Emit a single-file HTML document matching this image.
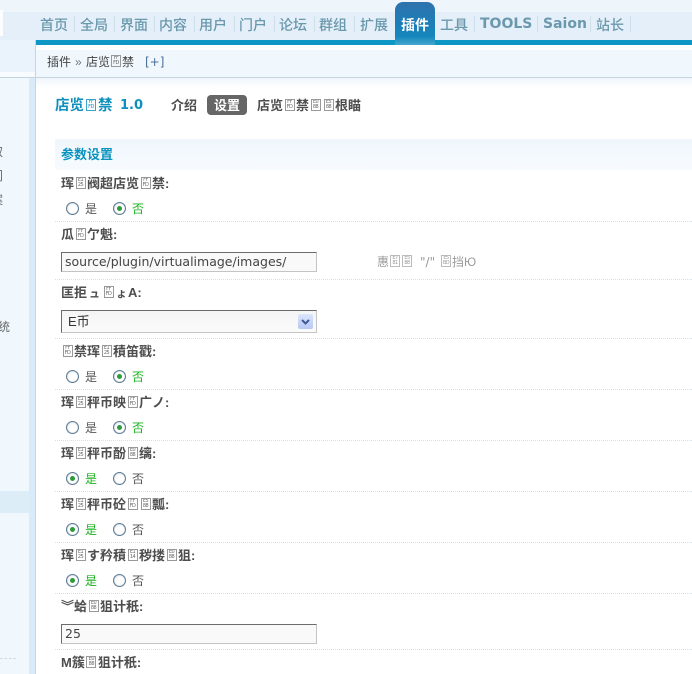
<!DOCTYPE html>
<html><head><meta charset="utf-8">
<style>
html,body{margin:0;padding:0;background:#fff}
#p{position:relative;width:692px;height:674px;overflow:hidden;background:#fff;font-family:"Liberation Sans","Noto Sans CJK SC",sans-serif;font-size:12px;color:#555}
#p>div{position:absolute}
.s{position:absolute;white-space:nowrap;line-height:16px}
.m{position:absolute;top:15px;line-height:20px;font-size:14px;color:#6a98ac;font-weight:500;white-space:nowrap;font-family:"Noto Sans CJK SC",sans-serif}
.m.e{font-family:"DejaVu Sans",sans-serif;font-weight:bold;top:14px}
.sep{position:absolute;top:16px;width:1px;height:16px;background:#cfdfe9}
.l{position:absolute;left:61px;font-weight:bold;line-height:16px;white-space:nowrap;color:#4d4d4d;font-family:"Liberation Sans","Noto Sans CJK SC",sans-serif;font-size:13px}
.l b{font-family:"Liberation Sans",sans-serif}
.t{display:inline-block;box-sizing:border-box;width:10px;height:12px;border:1px solid #999;font:normal 5px/5px "DejaVu Sans",sans-serif;color:#666;text-align:center;vertical-align:-1px;margin:0 1.5px;overflow:hidden;letter-spacing:-.5px;font-style:normal}
.n .t{margin:0 1px}
.d{position:absolute;left:55px;right:0;height:0;border-top:1px dotted #d4dfe6}
.r{position:absolute;width:11px;height:11px;border:1px solid #5d7a92;border-radius:50%;background:radial-gradient(circle at 60% 60%,#fff 40%,#dfe6ec 100%);box-shadow:inset 0 0 1px #8ea3b5}
.r.c::after{content:"";position:absolute;left:3px;top:3px;width:5px;height:5px;border-radius:50%;background:#2f9a3a}
.o{position:absolute;line-height:16px;font-size:12px;color:#555}
.g{color:#19b21e}
.i{position:absolute;left:61px;width:256px;box-sizing:border-box;border:1px solid #c4c4c4;border-top-color:#6b6b6b;border-left-color:#6b6b6b;background:#f9f9f9;font:12.5px/18px "DejaVu Sans",sans-serif;color:#444;padding-left:3px;white-space:nowrap}
</style></head><body>
<div id="p">
<div style="left:0;top:0;width:692px;height:12px;background:#eef5fb"></div>
<div style="left:0;top:12px;width:692px;height:28px;background:#e4eff9"></div>
<div style="left:0;top:40px;width:35px;height:32px;background:#eaf3fb"></div>
<div style="left:0;top:10px;width:3px;height:26px;background:#fbfdff"></div>
<div style="left:0;top:72px;width:35px;height:5px;background:#f8fbfe"></div>
<div style="left:35px;top:40px;width:657px;height:5px;background:#0e97c5"></div>
<div style="left:35px;top:45px;width:657px;height:5px;background:#fff"></div>
<div style="left:35px;top:50px;width:657px;height:27px;background:#f0f7fd"></div>
<div style="left:0;top:77px;width:692px;height:1px;background:#c5d5e0"></div>
<div style="left:36px;top:78px;width:656px;height:10px;background:linear-gradient(#f0f6fb,#fff)"></div>

<div style="left:0;top:78px;width:29px;height:596px;background:#f1f8fd"></div>
<div style="left:29px;top:78px;width:6px;height:596px;background:#d9ebf8"></div>
<div style="left:35px;top:40px;width:1px;height:634px;background:#c3d6e5"></div>
<div style="left:0;top:491px;width:29px;height:22px;background:#dcedf8"></div>
<div style="left:0;top:658px;width:16px;height:0;border-top:1px dashed #d4dde4"></div>
<span class="s" style="left:-9px;top:144px;color:#666">取</span>
<span class="s" style="left:-9px;top:168px;color:#666">门</span>
<span class="s" style="left:-9px;top:192px;color:#666">案</span>
<span class="s" style="left:-2px;top:319px;color:#666">统</span>

<div style="left:395px;top:2px;width:40px;height:43px;border-radius:8px 8px 0 0;background:linear-gradient(#2f72ad 0,#1a7fb8 55%,#1686bd 80%,#44a9cf 100%)"></div>
<span class="m" style="left:40px">首页</span><i class="sep" style="left:74px"></i>
<span class="m" style="left:80px">全局</span><i class="sep" style="left:114px"></i>
<span class="m" style="left:120px">界面</span><i class="sep" style="left:154px"></i>
<span class="m" style="left:159px">内容</span><i class="sep" style="left:194px"></i>
<span class="m" style="left:199px">用户</span><i class="sep" style="left:234px"></i>
<span class="m" style="left:239px">门户</span><i class="sep" style="left:274px"></i>
<span class="m" style="left:279px">论坛</span><i class="sep" style="left:314px"></i>
<span class="m" style="left:319px">群组</span><i class="sep" style="left:354px"></i>
<span class="m" style="left:360px">扩展</span>
<span class="m" style="left:401px;color:#fff;font-weight:bold">插件</span>
<span class="m" style="left:440px">工具</span><i class="sep" style="left:474px"></i>
<span class="m e" style="left:480px">TOOLS</span><i class="sep" style="left:537px"></i>
<span class="m e" style="left:543px">Saion</span><i class="sep" style="left:590px"></i>
<span class="m" style="left:596px">站长</span><i class="sep" style="left:630px"></i>

<span class="s" style="left:47px;top:54px;color:#444">插件</span>
<span class="s" style="left:75px;top:54px;color:#777">»</span>
<span class="s n" style="left:86px;top:54px;color:#444">店览<i class="t">FF<br>FD</i>禁</span>
<span class="s" style="left:145px;top:54px;color:#4a6f9c;font-family:'DejaVu Sans',sans-serif">[+]</span>

<span class="s" style="left:55px;top:98px;font-size:14.5px;font-weight:bold;color:#0c8fbe">店览<i class="t" style="border-color:#3aa3c9;color:#0c8fbe;margin:0 2px">FF<br>FD</i>禁</span>
<span class="s" style="left:120px;top:98px;font-size:13px;font-weight:bold;color:#0c8fbe;font-family:'DejaVu Sans',sans-serif">1.0</span>
<span class="s" style="left:171px;top:98px;font-size:13px;font-weight:bold;color:#4d4d4d">介绍</span>
<div style="left:207px;top:95px;width:40px;height:20px;border-radius:4px;background:#666"></div>
<span class="s" style="left:214px;top:98px;font-size:13px;font-weight:bold;color:#fff">设置</span>
<span class="s" style="left:257px;top:98px;font-size:13px;font-weight:bold;color:#4d4d4d">店览<i class="t">FF<br>FD</i>禁<i class="t">E0<br>88</i><i class="t">E5<br>88</i>根瞄</span>

<div style="left:55px;top:139px;width:637px;height:31px;background:linear-gradient(#eff6fc,#f7fbfe)"></div>
<span class="s" style="left:61px;top:147px;font-size:13px;font-weight:bold;color:#0a93bf">参数设置</span>

<span class="l" style="top:176px">珲<i class="t">E1<br>25</i>阀超店览<i class="t">FF<br>FD</i>禁:</span>
<i class="r" style="left:66px;top:202px"></i><span class="o" style="left:85px;top:201px">是</span>
<i class="r c" style="left:113px;top:202px"></i><span class="o g" style="left:132px;top:201px">否</span>
<i class="d" style="top:221px"></i>

<span class="l" style="top:227px">瓜<i class="t">FF<br>FD</i>亇魁:</span>
<div class="i" style="top:252px;height:20px">source/plugin/virtualimage/images/</div>
<span class="s n" style="left:377px;top:254px;color:#999">惠<i class="t" style="border-color:#bbb;color:#999">E7<br>81</i><i class="t" style="border-color:#bbb;color:#999">E5<br>88</i></span>
<span class="s" style="left:420px;top:254px;color:#999;font-family:'DejaVu Sans',sans-serif">"/"</span>
<span class="s n" style="left:441px;top:254px;color:#999"><i class="t" style="border-color:#bbb;color:#999;margin:0 1px 0 0">E5<br>BD</i>挡Ю</span>
<i class="d" style="top:279px"></i>

<span class="l" style="top:285px">匡拒<span style="font-size:11px;margin:0 2px">ュ</span><i class="t">FF<br>FD</i><span style="font-size:11px;margin:0 1px">ょ</span><b>A:</b></span>
<div class="i" style="top:310px;height:23px;line-height:21px;padding-left:6px;background:linear-gradient(#f4f4f4,#fbfbfb);font-family:'Liberation Sans','Noto Sans CJK SC',sans-serif;font-size:13px;color:#333">E币</div>
<div style="left:298px;top:314px;width:15px;height:15px;border-radius:2px;background:linear-gradient(#dbe5fb,#b7c8f3)"><svg width="15" height="15" style="display:block"><path d="M4 6l3.5 3.5L11 6" fill="none" stroke="#3d5a96" stroke-width="2"/></svg></div>
<i class="d" style="top:338px"></i>

<span class="l" style="top:344px"><i class="t">FF<br>FD</i>禁珲<i class="t">E1<br>25</i>積笛戳:</span>
<i class="r" style="left:66px;top:370px"></i><span class="o" style="left:85px;top:369px">是</span>
<i class="r c" style="left:113px;top:370px"></i><span class="o g" style="left:132px;top:369px">否</span>
<i class="d" style="top:389px"></i>

<span class="l" style="top:395px">珲<i class="t">E1<br>25</i>秤币映<i class="t">FF<br>FD</i>广ノ:</span>
<i class="r" style="left:66px;top:421px"></i><span class="o" style="left:85px;top:420px">是</span>
<i class="r c" style="left:113px;top:421px"></i><span class="o g" style="left:132px;top:420px">否</span>
<i class="d" style="top:440px"></i>

<span class="l" style="top:446px">珲<i class="t">E1<br>25</i>秤币酚<i class="t">E0<br>88</i>缡:</span>
<i class="r c" style="left:66px;top:472px"></i><span class="o g" style="left:85px;top:471px">是</span>
<i class="r" style="left:113px;top:472px"></i><span class="o" style="left:132px;top:471px">否</span>
<i class="d" style="top:491px"></i>

<span class="l" style="top:497px">珲<i class="t">E1<br>25</i>秤币砼<i class="t">FF<br>FD</i><i class="t">E5<br>88</i>瓢:</span>
<i class="r c" style="left:66px;top:523px"></i><span class="o g" style="left:85px;top:522px">是</span>
<i class="r" style="left:113px;top:523px"></i><span class="o" style="left:132px;top:522px">否</span>
<i class="d" style="top:542px"></i>

<span class="l" style="top:548px">珲<i class="t">E1<br>25</i>す矜積<i class="t">E1<br>14</i>秽搂<i class="t">E0<br>88</i>狙:</span>
<i class="r c" style="left:66px;top:574px"></i><span class="o g" style="left:85px;top:573px">是</span>
<i class="r" style="left:113px;top:574px"></i><span class="o" style="left:132px;top:573px">否</span>
<i class="d" style="top:593px"></i>

<span class="l" style="top:599px">︾蛤<i class="t">E0<br>88</i>狙计秖:</span>
<div class="i" style="top:624px;height:20px">25</div>
<i class="d" style="top:649px"></i>

<span class="l" style="top:655px"><b>M</b>簇<i class="t">E0<br>88</i>狙计秖:</span>
</div>
</body></html>
